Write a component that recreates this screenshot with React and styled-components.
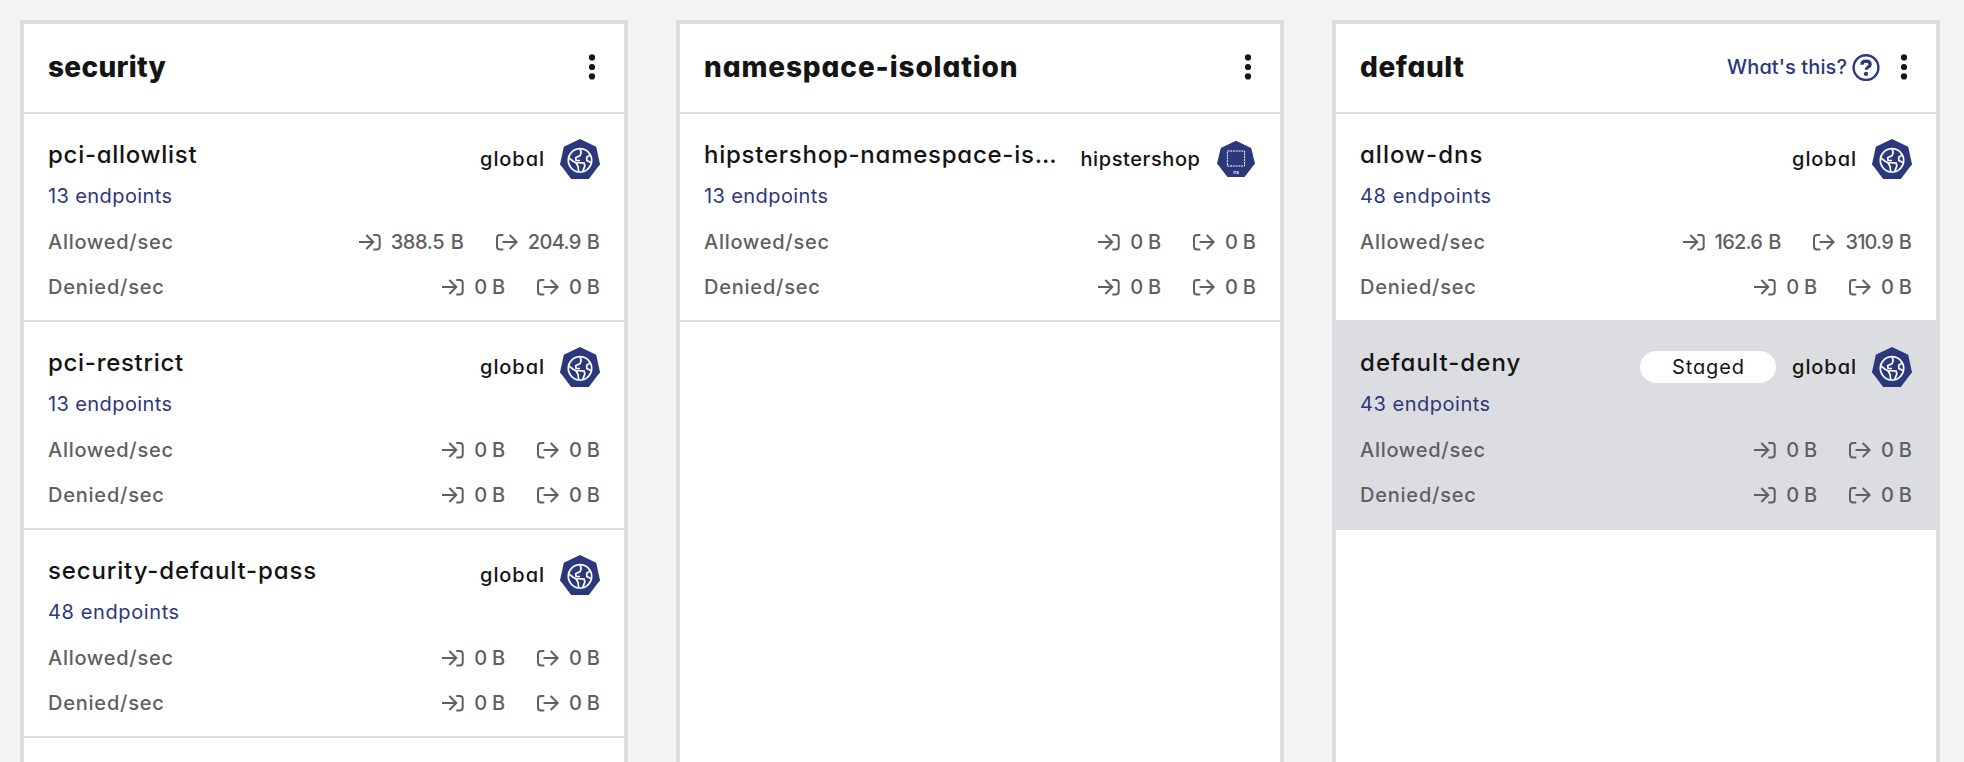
import React from "react";
import styled, { createGlobalStyle } from "styled-components";

const color = {
  page: "#f4f4f4",
  line: "#dcdde1",
  ink: "#141414",
  muted: "#606060",
  link: "#2b387c",
  white: "#ffffff",
};

const GlobalStyle = createGlobalStyle`
  *, *::before, *::after { box-sizing: border-box; }
  html, body { margin: 0; height: 100%; overflow: hidden; }
  body {
    background: ${color.page};
    color: ${color.ink};
    font-family: Inter, "Open Sans", sans-serif;
    font-feature-settings: "cv11";
    -webkit-font-smoothing: antialiased;
  }
`;

/* Letter spacing for each label, in pixels. */
const tracking = {
  security: 0.3,
  "namespace-isolation": 0.88,
  default: 0.6,
  "pci-allowlist": 0.72,
  "pci-restrict": 0.7,
  "security-default-pass": 0.86,
  "hipstershop-namespace-is…": 0.75,
  "allow-dns": 1.02,
  "default-deny": 1.06,
  "13 endpoints": 0.4,
  "48 endpoints": 0.61,
  "43 endpoints": 0.52,
  "Allowed/sec": 0.71,
  "Denied/sec": 0.78,
  global: 0.93,
  hipstershop: 0.6,
  "What's this?": 0.1,
  Staged: 0.87,
  "388.5 B": -0.4,
  "204.9 B": -0.65,
  "0 B": -0.5,
  "162.6 B": -0.75,
  "310.9 B": -0.85,
};

const Board = styled.main`
  display: flex;
  gap: 48px;
  height: 100vh;
  padding: 20px 0 0 20px;
`;

const Tier = styled.section`
  flex: 0 0 608px;
  background: ${color.white};
  border: 4px solid ${color.line};
  border-bottom: 0;
`;

const TierHeader = styled.header`
  display: flex;
  align-items: center;
  height: 90px;
  padding: 0 24px 2px 24px;
  border-bottom: 2px solid ${color.line};
`;

const Tracked = styled.span`
  display: block;
  white-space: nowrap;
  letter-spacing: ${(p) => p.$track}px;
  margin-right: ${(p) => -p.$track}px;
`;

const TierTitle = styled.h2`
  flex: 1;
  margin: 0;
  font-size: 28px;
  font-weight: 800;
  line-height: 42px;
`;

const HelpLink = styled.a`
  display: flex;
  align-items: center;
  gap: 5px;
  margin-right: 16px;
  color: ${color.link};
  font-size: 20px;
  font-weight: 500;
  line-height: 30px;
`;

const Kebab = styled.button`
  display: flex;
  justify-content: center;
  width: 16px;
  padding: 0;
  border: 0;
  background: none;
  color: inherit;
`;

const Policy = styled.article`
  height: 208px;
  padding: 23px 24px 0;
  border-bottom: 2px solid ${color.line};
  background: ${(p) => (p.$staged ? color.line : color.white)};
`;

const PolicyTop = styled.div`
  display: flex;
  justify-content: space-between;
  height: 74px;
`;

const PolicyName = styled.h3`
  margin: 0 0 8px;
  font-size: 24px;
  font-weight: 500;
  line-height: 36px;
`;

const Endpoints = styled.a`
  color: ${color.link};
  font-size: 20px;
  font-weight: 400;
  line-height: 30px;
`;

const Scope = styled.div`
  display: flex;
  align-items: center;
  gap: 16px;
  height: 44px;
  font-size: 20px;
  font-weight: 500;
  line-height: 30px;
`;

const StagedPill = styled.span`
  display: flex;
  justify-content: center;
  width: 136px;
  border-radius: 16px;
  background: ${color.white};
  font-weight: 400;
  line-height: 32px;
`;

const RateRow = styled.div`
  display: flex;
  justify-content: space-between;
  height: 30px;
  margin: 16px 0 15px;
  color: ${color.muted};
  font-size: 20px;
  font-weight: 500;
  line-height: 30px;

  & + & { margin-top: 0; }
`;

const Rates = styled.div`
  display: flex;
  gap: 32px;
`;

const Rate = styled.div`
  display: flex;
  align-items: center;
  gap: 10px;
  word-spacing: ${(p) => (p.$zero ? 0.5 : 1.5)}px;
`;

const Icon = styled.svg`
  display: block;
  flex: none;
`;

function Text({ children }) {
  return <Tracked $track={tracking[children] ?? 0}>{children}</Tracked>;
}

function DotsIcon() {
  return (
    <Icon width="8" height="28" viewBox="0 0 8 28" fill="currentColor">
      <circle cx="4" cy="4.4" r="3.1" />
      <circle cx="4" cy="14" r="3.1" />
      <circle cx="4" cy="23.4" r="3.1" />
    </Icon>
  );
}

function HelpIcon() {
  return (
    <Icon width="28" height="28" viewBox="0 0 28 28" fill="none" stroke="currentColor">
      <circle cx="14" cy="14.6" r="12.4" strokeWidth="2.4" />
      <path d="M9.9 11.7C9.9 9.4 11.5 8.2 14 8.2s4.2 1.2 4.2 3.2c0 2.5-3.9 2.8-4 5.4" strokeWidth="3.2" />
      <circle cx="14" cy="20.9" r="2.1" fill="currentColor" stroke="none" />
    </Icon>
  );
}

function IngressIcon() {
  return (
    <Icon width="22" height="18" viewBox="0 0 22 18" fill="none" stroke="currentColor" strokeWidth="2">
      <path d="M0 9h14M7.3 2l7 7-7 7M14.3 2h3.4a3 3 0 0 1 3 3v8.4a3 3 0 0 1-3 3h-3.4" />
    </Icon>
  );
}

function EgressIcon() {
  return (
    <Icon width="22" height="18" viewBox="0 0 22 18" fill="none" stroke="currentColor" strokeWidth="2">
      <path d="M7.3 2H4a3 3 0 0 0-3 3v8.4a3 3 0 0 0 3 3h3.3M6.5 9h14M13.7 2l7 7-7 7" />
    </Icon>
  );
}

function GlobalIcon() {
  return (
    <Icon width="40" height="40" viewBox="0 0 40 40" fill="none">
      <path d="M20 0l16.2 7.8L40 25.3 28.8 40H11.2L0 25.3 3.8 7.8z" fill={color.link} />
      <g stroke="#fff" strokeWidth="1.7" strokeLinejoin="round">
        <circle cx="20" cy="21.3" r="11.7" />
        <path d="M19.8 9.8l1.4 3.2-1 3.4-4.5 2.4.3 2.7h4" />
        <path d="M8.6 18.7l4.2 3.3 3.4 2 2 3.8.4 4.8M17 23.5l7.2.6.6 3-2.2 5.4" />
        <path d="M30.4 15.8l-3.6 2.3v3.5l4.6 2.2" />
      </g>
    </Icon>
  );
}

function NamespaceIcon() {
  return (
    <Icon width="40" height="40" viewBox="-1 -1 40 40" fill="none">
      <path d="M19 .8l15.2 7.3L38 23.5 27.5 37h-17L0 23.5 3.8 8.1z" fill={color.link} />
      <rect x="10.4" y="11" width="17.2" height="15" stroke="#fff" strokeWidth="1" strokeDasharray="2 .8" />
      <text x="19" y="34" textAnchor="middle" fill="#fff" fontSize="5" fontFamily="Inter, sans-serif">ns</text>
    </Icon>
  );
}

const none = ["0 B", "0 B"];

const tiers = [
  {
    name: "security",
    policies: [
      { name: "pci-allowlist", endpoints: 13, scope: "global", allowed: ["388.5 B", "204.9 B"], denied: none },
      { name: "pci-restrict", endpoints: 13, scope: "global", allowed: none, denied: none },
      { name: "security-default-pass", endpoints: 48, scope: "global", allowed: none, denied: none },
    ],
  },
  {
    name: "namespace-isolation",
    policies: [
      { name: "hipstershop-namespace-is…", endpoints: 13, scope: "hipstershop", allowed: none, denied: none },
    ],
  },
  {
    name: "default",
    help: true,
    policies: [
      { name: "allow-dns", endpoints: 48, scope: "global", allowed: ["162.6 B", "310.9 B"], denied: none },
      { name: "default-deny", endpoints: 43, scope: "global", staged: true, allowed: none, denied: none },
    ],
  },
];

function RateLine({ label, values }) {
  return (
    <RateRow>
      <Text>{label}</Text>
      <Rates>
        <Rate $zero={values[0] === "0 B"}>
          <IngressIcon />
          <Text>{values[0]}</Text>
        </Rate>
        <Rate $zero={values[1] === "0 B"}>
          <EgressIcon />
          <Text>{values[1]}</Text>
        </Rate>
      </Rates>
    </RateRow>
  );
}

function PolicyCard({ policy }) {
  return (
    <Policy $staged={policy.staged}>
      <PolicyTop>
        <div>
          <PolicyName><Text>{policy.name}</Text></PolicyName>
          <Endpoints><Text>{`${policy.endpoints} endpoints`}</Text></Endpoints>
        </div>
        <Scope>
          {policy.staged && <StagedPill><Text>Staged</Text></StagedPill>}
          <Text>{policy.scope}</Text>
          {policy.scope === "global" ? <GlobalIcon /> : <NamespaceIcon />}
        </Scope>
      </PolicyTop>
      <RateLine label="Allowed/sec" values={policy.allowed} />
      <RateLine label="Denied/sec" values={policy.denied} />
    </Policy>
  );
}

export default function App() {
  return (
    <>
      <GlobalStyle />
      <Board>
        {tiers.map((tier) => (
          <Tier key={tier.name}>
            <TierHeader>
              <TierTitle><Text>{tier.name}</Text></TierTitle>
              {tier.help && (
                <HelpLink>
                  <Text>What's this?</Text>
                  <HelpIcon />
                </HelpLink>
              )}
              <Kebab aria-label="Tier actions"><DotsIcon /></Kebab>
            </TierHeader>
            {tier.policies.map((policy) => (
              <PolicyCard key={policy.name} policy={policy} />
            ))}
          </Tier>
        ))}
      </Board>
    </>
  );
}
